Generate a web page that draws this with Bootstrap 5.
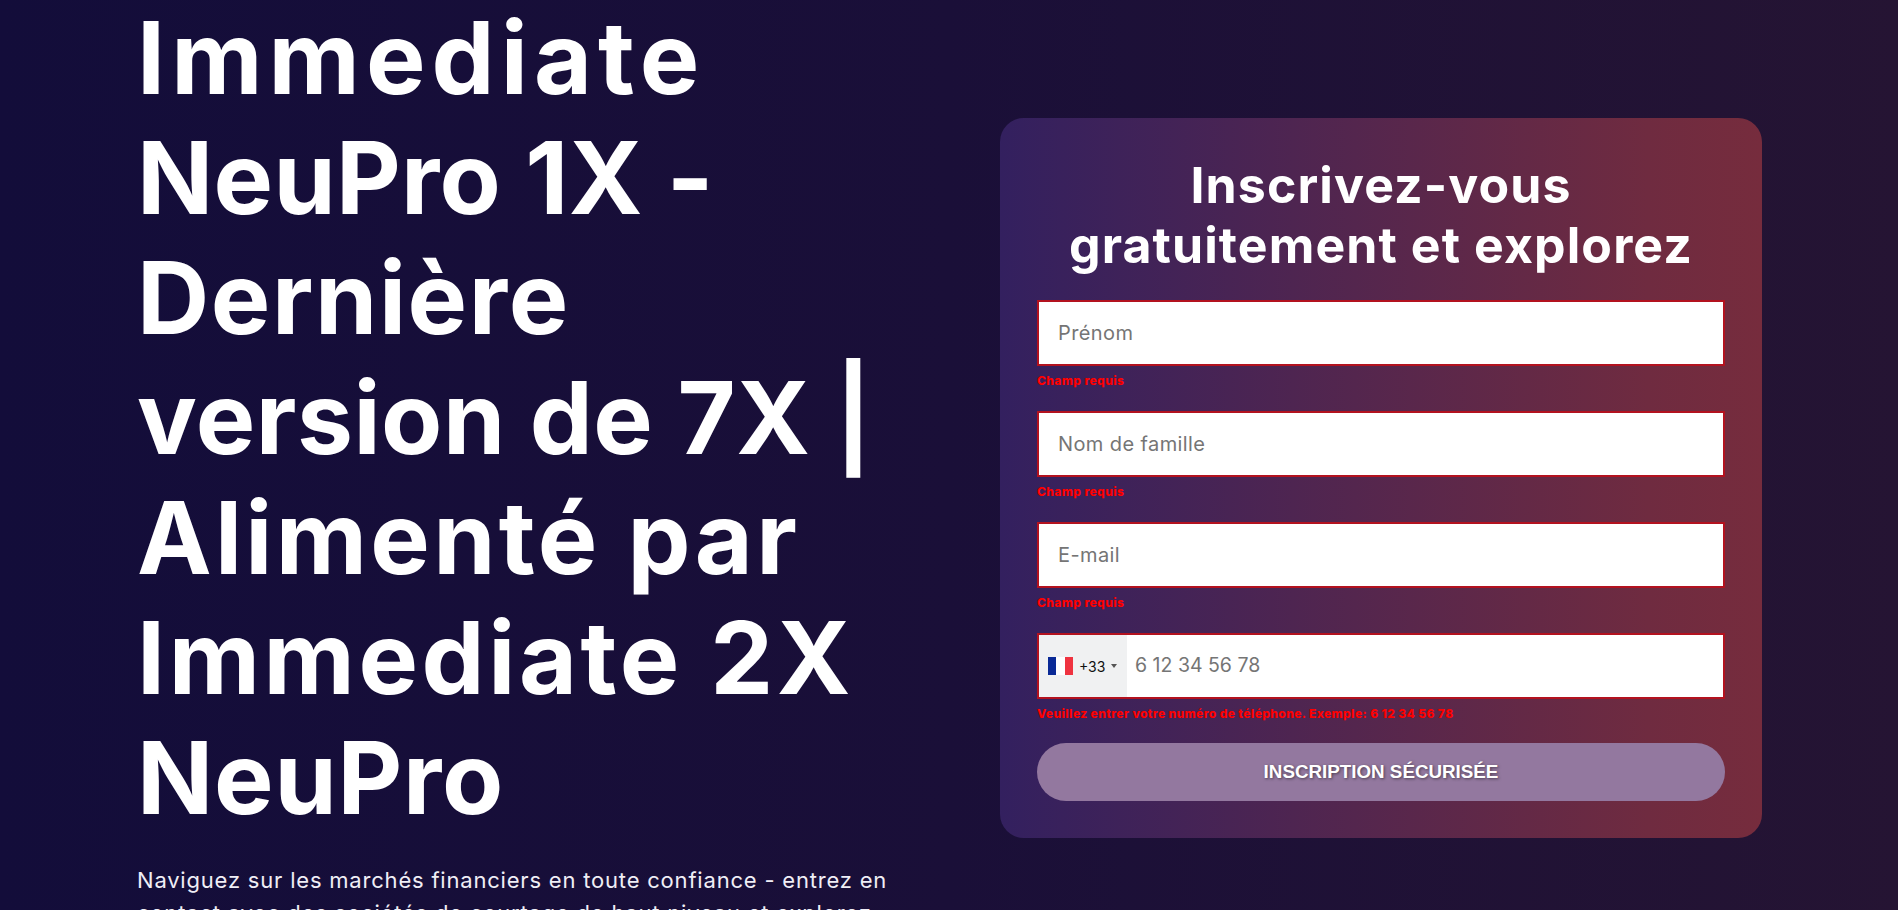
<!doctype html>
<html lang="fr"><head><meta charset="utf-8"><title>Immediate NeuPro</title>
<link href="https://cdn.jsdelivr.net/npm/bootstrap@5.3.0/dist/css/bootstrap.min.css" rel="stylesheet">
<style>
html,body{height:910px;overflow:hidden}
body{background:linear-gradient(90deg,#130d3a 0%,#1a0f38 50%,#251433 100%);font-family:Inter,"Noto Sans",sans-serif;color:#fff}
.hero-wrap{padding:0 136px 0 137px;margin-top:-2px;height:912px;overflow:hidden}
.hero-left{width:770px;flex:none}
.hero-title{font-family:Inter,sans-serif;font-size:100px;line-height:120px;font-weight:700;margin:0 0 26px}
.hero-title span{display:block;white-space:nowrap}
.hl-a{letter-spacing:6.1px}.hl-b{letter-spacing:.3px}.hl-c{letter-spacing:1.6px}.hl-d{letter-spacing:.5px}.hl-e{letter-spacing:3.3px}.hl-f{letter-spacing:3.6px}.hl-g{letter-spacing:.8px}
.hero-text{font-size:22px;line-height:33px;margin:0;color:#f0eef6;white-space:nowrap;letter-spacing:.8px}
.signup-card{width:762px;height:720px;flex:none;margin-top:120px;padding:37px;border-radius:24px;background:linear-gradient(90deg,#33205f 0%,#6f2b40 85%,#762c3d 100%)}
.signup-title{font-family:Inter,sans-serif;font-size:50px;line-height:60px;font-weight:700;letter-spacing:1.1px;text-align:center;margin:0 0 25px}
.field-input.form-control{height:66px;border:2px solid #b3121f;border-radius:0;font-size:20px;letter-spacing:.4px;padding:0 19px;background:#fff;color:#333}
.field-input::placeholder{color:#757575}
.field-err{color:#f00;font-size:12px;font-weight:800;letter-spacing:.4px;line-height:16px;margin:7px 0 22px;height:16px}
.phone-box{height:66px;border:2px solid #b3121f;background:#fff}
.dial-pick{width:88px;background:#f0f1f2;gap:6px;padding-left:9px;color:#111;font-size:14px;flex:none}
.flag-fr{width:25px;height:18px;background:linear-gradient(90deg,#0a2a96 33%,#fff 33% 66%,#ef3340 66%)}
.caret-dn{border:3.5px solid transparent;border-top:4px solid #555;border-bottom:0}
.phone-box input{border:0;outline:0;flex:1;min-width:0;font-size:19.5px;padding:0 8px;font-family:inherit}
.phone-box input::placeholder{color:#757575}
.submit-btn.btn{height:58px;width:100%;border:0;border-radius:29px;background:#93789f;color:#fff;font-family:"Liberation Sans",sans-serif;font-weight:700;font-size:18.8px;text-transform:uppercase;text-shadow:1px 1px 3px rgba(0,0,0,.5);margin-top:-1px}
</style></head><body>
<main class="hero-wrap d-flex justify-content-between align-items-start">
<section class="hero-left">
<h1 class="hero-title"><span class="hl-a">Immediate</span><span class="hl-b">NeuPro 1X -</span><span class="hl-c">Dernière</span><span class="hl-d">version de 7X |</span><span class="hl-e">Alimenté par</span><span class="hl-f">Immediate 2X</span><span class="hl-g">NeuPro</span></h1>
<p class="hero-text">Naviguez sur les marchés financiers en toute confiance - entrez en<br>contact avec des sociétés de courtage de haut niveau et explorez</p>
</section>
<section class="signup-card">
<h2 class="signup-title">Inscrivez-vous<br>gratuitement et explorez</h2>
<form>
<input class="form-control field-input" type="text" placeholder="Prénom"><div class="field-err">Champ requis</div>
<input class="form-control field-input" type="text" placeholder="Nom de famille"><div class="field-err">Champ requis</div>
<input class="form-control field-input" type="email" placeholder="E-mail"><div class="field-err">Champ requis</div>
<div class="phone-box d-flex"><div class="dial-pick d-flex align-items-center"><span class="flag-fr"></span><span>+33</span><span class="caret-dn"></span></div><input type="tel" placeholder="6 12 34 56 78"></div>
<div class="field-err">Veuillez entrer votre numéro de téléphone. Exemple: 6 12 34 56 78</div>
<button type="button" class="btn submit-btn">Inscription sécurisée</button>
</form>
</section>
</main>
<script src="https://cdn.jsdelivr.net/npm/bootstrap@5.3.0/dist/js/bootstrap.bundle.min.js"></script>
</body></html>
